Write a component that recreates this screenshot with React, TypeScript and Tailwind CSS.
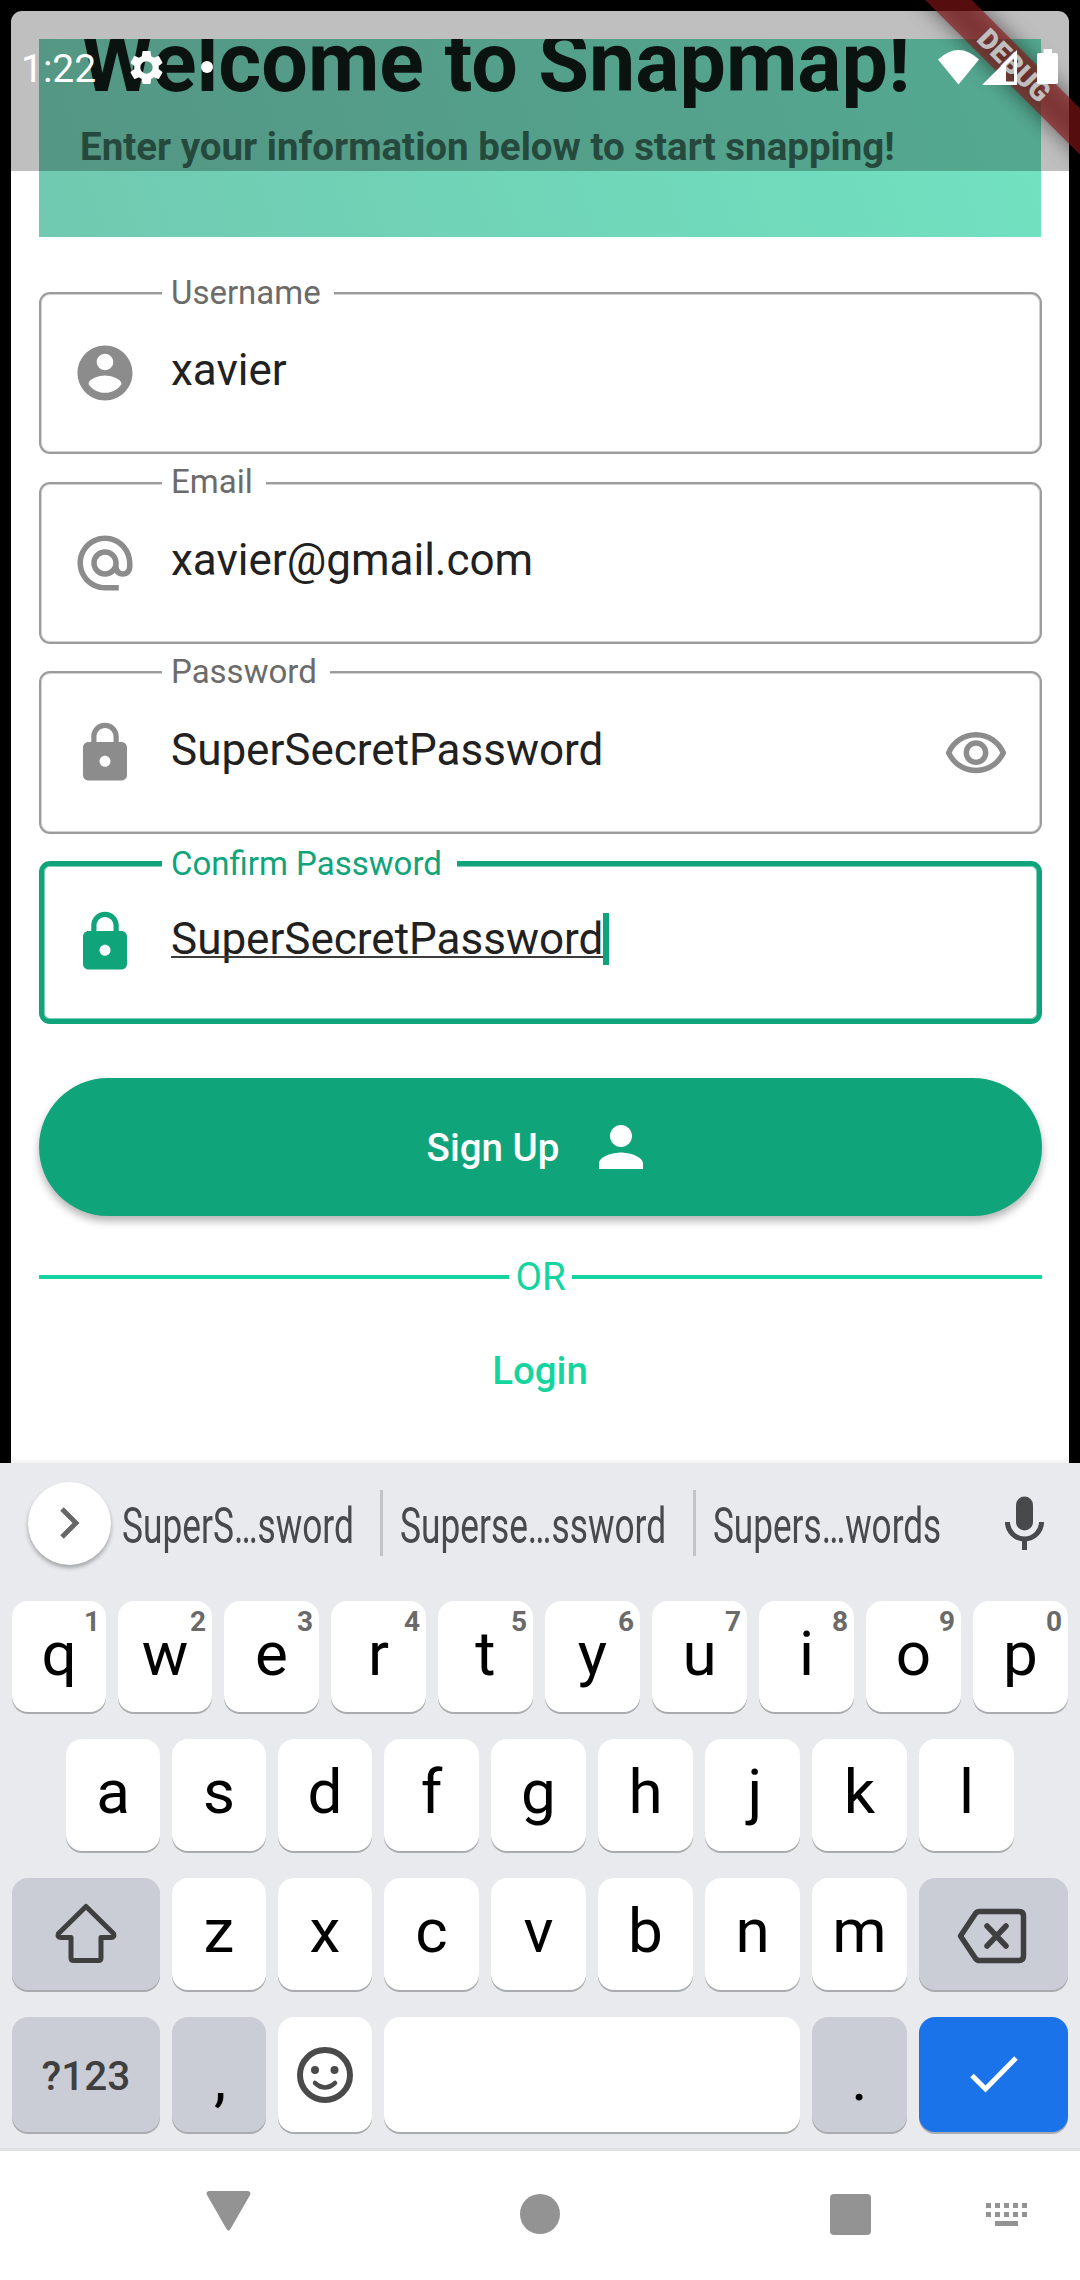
import type { ReactNode } from "react";
import { MdAlternateEmail, MdLock, MdPerson, MdSettings } from "react-icons/md";

function AccountIcon() {
  return (
    <svg viewBox="0 0 24 24" className="size-[66px]" fill="currentColor">
      <path d="M12 2C6.48 2 2 6.48 2 12s4.48 10 10 10 10-4.48 10-10S17.52 2 12 2zm0 3c1.66 0 3 1.34 3 3s-1.34 3-3 3-3-1.34-3-3 1.34-3 3-3zm0 14.2c-2.5 0-4.71-1.28-6-3.22.03-1.99 4-3.08 6-3.08 1.99 0 5.97 1.09 6 3.08-1.29 1.94-3.5 3.22-6 3.22z" />
    </svg>
  );
}

function EyeIcon() {
  return (
    <svg viewBox="0 0 24 24" className="mt-[2px] size-[66px]" fill="currentColor">
      <path d="M12 6c3.79 0 7.17 2.13 8.82 5.5C19.17 14.87 15.79 17 12 17s-7.17-2.13-8.82-5.5C4.83 8.13 8.21 6 12 6m0-2C7 4 2.73 7.11 1 11.5 2.73 15.89 7 19 12 19s9.27-3.11 11-7.5C21.27 7.11 17 4 12 4zm0 5c1.38 0 2.5 1.12 2.5 2.5S13.38 14 12 14s-2.5-1.12-2.5-2.5S10.62 9 12 9m0-2c-2.48 0-4.5 2.02-4.5 4.5S9.52 16 12 16s4.5-2.02 4.5-4.5S14.48 7 12 7z" />
    </svg>
  );
}

type FieldProps = {
  label: string;
  value: string;
  icon: ReactNode;
  trailing?: ReactNode;
  focused?: boolean;
  className: string;
  labelClass: string;
};

function Field({ label, value, icon, trailing, focused, className, labelClass }: FieldProps) {
  const tone = focused
    ? "border-[5px] border-[#0fa47a] shadow-[inset_0_0_0_1px_#7fcfb6] pb-[2px] pl-[28px] pr-[27px] text-[#0fa47a]"
    : "border-2 border-[#9c9c9c] shadow-[inset_0_0_0_1px_#d2d2d2] pl-[31px] pr-[31px] text-[#8c8c8c]";
  return (
    <div className={`relative -mr-px flex items-center rounded-[11px] ${tone} ${className}`}>
      <span
        className={`absolute whitespace-nowrap bg-white pl-[9px] text-[33px] leading-[40px] ${labelClass} ${
          focused ? "left-[118px] text-[#0fa47a]" : "left-[121px] text-[#6b6b6b]"
        }`}
      >
        {label}
      </span>
      {icon}
      <span
        className={`relative ml-[33px] mb-[6px] text-[44px] leading-[60px] text-[#212121] ${
          focused ? "after:absolute after:left-0 after:top-[47px] after:h-[2px] after:w-full after:bg-[#3c3c3c]" : ""
        }`}
      >
        {value}
      </span>
      {focused && <span className="mb-[6px] h-[52px] w-[6px] bg-[#0fa47a]" />}
      {trailing && <span className="ml-auto">{trailing}</span>}
    </div>
  );
}

function Key({ children, hint, tone = "bg-white text-black", pad = "pb-[7px]" }: { children?: ReactNode; hint?: string; tone?: string; pad?: string }) {
  return (
    <div className={`relative flex items-center justify-center rounded-[16px] text-[62px] leading-[70px] shadow-[0_2px_0_#a9abae] ${tone} ${pad}`}>
      {children}
      {hint && (
        <span className="absolute right-[5px] top-[5px] w-[18px] text-center text-[28px] leading-[32px] font-bold text-[#6a6a6a]">{hint}</span>
      )}
    </div>
  );
}

const GRAY = "bg-[#cbcdd6] text-black";

function Suggestion({ text, width, scale }: { text: string; width: string; scale: string }) {
  return (
    <div className={`${width} text-[50px] leading-[60px] whitespace-nowrap text-[#48494b]`}>
      <span className={`inline-block origin-left ${scale}`}>{text}</span>
    </div>
  );
}

export default function App() {
  return (
    <div className="relative flex h-[2280px] w-[1080px] flex-col overflow-hidden bg-black font-['Roboto',sans-serif]">
      {/* App screen */}
      <main className="mx-[11px] mt-[11px] flex h-[1452px] flex-col rounded-t-[11px] bg-white px-[28px] pt-[28px]">
        <header className="h-[198px] shrink-0 overflow-hidden bg-[linear-gradient(72deg,#70c9b0,#71e2c1)] pl-[41px]">
          <h1 className="-mt-[24px] ml-px text-[82.5px] leading-[96px] font-bold whitespace-nowrap text-[#0f1a16]">Welcome to Snapmap!</h1>
          <p className="mt-[12px] text-[38.5px] leading-[48px] font-bold whitespace-nowrap text-[#336253]">
            Enter your information below to start snapping!
          </p>
        </header>
        <Field className="mt-[55px] h-[162px]" label="Username" value="xavier" icon={<AccountIcon />} labelClass="-top-[21px] w-[172px]" />
        <Field className="mt-[28px] h-[162px]" label="Email" value="xavier@gmail.com" icon={<MdAlternateEmail className="size-[66px]" />} labelClass="-top-[22px] w-[104px]" />
        <Field
          className="mt-[27px] h-[163px]"
          label="Password"
          value="SuperSecretPassword"
          icon={<MdLock className="size-[66px]" />}
          trailing={<EyeIcon />}
          labelClass="-top-[21px] w-[168px]"
        />
        <Field className="mt-[27px] h-[163px]" label="Confirm Password" value="SuperSecretPassword" icon={<MdLock className="size-[66px]" />} labelClass="-top-[22px] w-[295px]" focused />
        <button className="-mr-px mt-[54px] flex h-[138px] items-center justify-center rounded-full bg-[#0fa47a] text-[38.5px] leading-[48px] font-medium text-white shadow-[0_5px_8px_rgba(0,0,0,0.3)]">
          <span className="mt-[2px]">Sign Up</span>
          <MdPerson className="ml-[29px] size-[66px]" />
        </button>
        <div className="-mr-px mt-[37px] flex h-[48px] items-center text-[38.5px] leading-[48px] text-[#14d5a0]">
          <span className="h-[4px] flex-1 bg-[#14d5a0]" />
          <span className="w-[63px] text-center">OR</span>
          <span className="h-[4px] flex-1 bg-[#14d5a0]" />
        </div>
        <button className="mx-auto mt-[46px] text-[38.5px] leading-[48px] font-medium text-[#14d5a0]">Login</button>
      </main>

      {/* Keyboard */}
      <section className="flex h-[688px] flex-col border-b-[3px] border-[#dfe0e2] bg-[#e8eaed] px-[12px] shadow-[0_-1px_6px_rgba(0,0,0,0.08)]">
        <div className="mt-[18px] flex h-[84px] items-center pl-[16px]">
          <div className="flex size-[83px] items-center justify-center rounded-full bg-white shadow-[0_3px_4px_rgba(0,0,0,0.3)]">
            <svg viewBox="0 0 20 32" className="h-[32px] w-[20px]" fill="none" stroke="#676767" strokeWidth="5">
              <path d="M2 2 L16 16 L2 30" />
            </svg>
          </div>
          <div className="flex flex-1 items-center pl-[11px]">
            <Suggestion text="SuperS…sword" width="w-[258px] pt-[6px]" scale="scale-x-[0.706]" />
            <span className="mr-[17px] h-[66px] w-[3px] bg-[#c2c4c8]" />
            <Suggestion text="Superse…ssword" width="w-[293px] pt-[6px]" scale="scale-x-[0.706]" />
            <span className="mr-[17px] h-[66px] w-[3px] bg-[#c2c4c8]" />
            <Suggestion text="Supers…words" width="w-[292px] pt-[6px]" scale="scale-x-[0.703]" />
            <svg viewBox="0 0 39 54" className="h-[54px] w-[39px]">
              <rect x="11" y="0.5" width="17" height="34" rx="8.5" fill="#48494b" />
              <path d="M2.5 26a17 17 0 0 0 34 0M19.5 42v12" fill="none" stroke="#48494b" strokeWidth="5" />
            </svg>
          </div>
        </div>
        <div className="mt-[36px] grid h-[111px] grid-cols-[94px_94px_95px_95px_95px_95px_95px_95px_95px_95px] gap-[12px]">
          {"qwertyuiop".split("").map((c, i) => (
            <Key key={c} pad="pb-[5px]" hint={String((i + 1) % 10)}>{c}</Key>
          ))}
        </div>
        <div className="ml-[54px] mt-[27px] grid h-[112px] grid-cols-[94px_94px_94px_95px_95px_95px_95px_95px_95px] gap-[12px]">
          {"asdfghjkl".split("").map((c) => (
            <Key key={c} pad={c === "j" ? "pb-[7px] pl-[5px]" : "pb-[7px]"}>{c}</Key>
          ))}
        </div>
        <div className="mt-[27px] grid h-[112px] grid-cols-[148px_94px_94px_95px_95px_95px_95px_95px_149px] gap-[12px]">
          <Key tone={GRAY} pad="pb-[2px]">
            <svg viewBox="0 0 62 62" className="size-[62px]" fill="none" stroke="#3f3f3f" strokeWidth="5" strokeLinejoin="round">
              <path d="M31 4.5 L58.5 31.5 Q60 35.5 56 35.5 H46 V56 Q46 58.5 43.5 58.5 H18.5 Q16 58.5 16 56 V35.5 H6 Q2 35.5 3.5 31.5 Z" />
            </svg>
          </Key>
          {"zxcvbnm".split("").map((c) => (
            <Key key={c}>{c}</Key>
          ))}
          <Key tone={GRAY} pad="pt-[4px] pr-[3px]">
            <svg viewBox="0 0 70 56" className="h-[56px] w-[70px]" fill="none" stroke="#3f3f3f" strokeWidth="5.5" strokeLinejoin="round" strokeLinecap="round">
              <path d="M3.5 28 L18.5 5.5 Q20 3.5 22.5 3.5 H62 Q66.5 3.5 66.5 8 V48 Q66.5 52.5 62 52.5 H22.5 Q20 52.5 18.5 50.5 Z M30 18 L49 38 M49 18 L30 38" />
            </svg>
          </Key>
        </div>
        <div className="mt-[27px] grid h-[115px] grid-cols-[148px_94px_94px_416px_95px_149px] gap-[12px]">
          <Key tone={GRAY} pad="pt-[3px]">
            <span className="text-[40.5px] font-medium text-[#3f3f3f]">?123</span>
          </Key>
          <Key tone={GRAY} pad="pt-[8px] pl-[2px]">,</Key>
          <Key pad="pb-0">
            <svg viewBox="0 0 56 56" className="size-[56px]" fill="none" stroke="#4a4a4a" strokeLinecap="round">
              <circle cx="28" cy="28" r="25" strokeWidth="6" />
              <circle cx="18" cy="23" r="4" fill="#4a4a4a" stroke="none" />
              <circle cx="37.5" cy="23" r="4" fill="#4a4a4a" stroke="none" />
              <path d="M18 36 Q28 45 38 36" strokeWidth="4.5" />
            </svg>
          </Key>
          <Key />
          <Key tone={GRAY} pad="pt-[8px]">.</Key>
          <Key tone="bg-[#1b73ea] text-white" pad="pb-0">
            <svg viewBox="0 0 48 37" className="h-[37px] w-[48px]" fill="none" stroke="#fff" strokeWidth="5">
              <path d="M2 19.5 L15.5 33 L46 2" />
            </svg>
          </Key>
        </div>
      </section>

      {/* Navigation bar */}
      <nav className="flex h-[129px] items-start bg-white text-[#939393]">
        <svg viewBox="0 0 45 40" className="ml-[206px] mt-[40px] h-[40px] w-[45px]" fill="currentColor">
          <path d="M3 0 H42 Q45.5 0.5 44 4 L24.5 38 Q22.5 41 20.5 38 L1 4 Q-0.5 0.5 3 0 Z" />
        </svg>
        <span className="ml-[269px] mt-[43px] size-[40px] rounded-full bg-[#939393]" />
        <span className="ml-[270px] mt-[43px] size-[41px] rounded-[4px] bg-[#939393]" />
        <div className="ml-[115px] mt-[52px] flex w-[41px] flex-col items-center gap-[4px]">
          {[0, 1].map((row) => (
            <div key={row} className="flex w-full justify-between">
              {[0, 1, 2, 3, 4].map((dot) => (
                <span key={dot} className="size-[5px] bg-[#939393]" />
              ))}
            </div>
          ))}
          <span className="h-[5px] w-[23px] bg-[#939393]" />
        </div>
      </nav>

      {/* Debug ribbon: soft shadow under a translucent band */}
      <div className="absolute left-[864px] top-[49px] h-[33px] w-[300px] rotate-45 bg-black/50 blur-[11px]" />
      <div className="absolute left-[864px] top-[49px] flex h-[33px] w-[300px] rotate-45 items-center justify-center bg-[#b71c1ca0]">
        <span className="text-[28px] leading-[33px] font-black text-white">DEBUG</span>
      </div>

      {/* Status bar */}
      <div className="absolute inset-x-0 top-0 flex h-[171px] items-start bg-black/25 text-white">
        <span className="ml-[21px] mt-[43px] w-[108px] text-[39px] leading-[52px]">1:22</span>
        <MdSettings className="-ml-[3px] mt-[47px] size-[41px]" />
        <span className="ml-[34px] mt-[61px] size-[12px] rounded-full bg-white" />
        <svg viewBox="0 0 41 35" className="ml-[725px] mt-[50px] h-[35px] w-[41px]" fill="currentColor">
          <path d="M0 9.5 Q20.5 -9.5 41 9.5 L20.5 34.5 Z" />
        </svg>
        <svg viewBox="0 0 35 35" className="ml-[3px] mt-[50px] size-[35px]">
          <path fillRule="evenodd" fill="currentColor" d="M35 0 V35 H0 Z M24 15 V31.5 H32 V8 Z" />
        </svg>
        <svg viewBox="0 0 21 35" className="ml-[20px] mt-[49px] h-[35px] w-[21px]" fill="currentColor">
          <path d="M6.5 0 H15 V4 H19 Q21 4 21 6 V33 Q21 35 19 35 H2 Q0 35 0 33 V6 Q0 4 2 4 H6.5 Z" />
        </svg>
      </div>
    </div>
  );
}
